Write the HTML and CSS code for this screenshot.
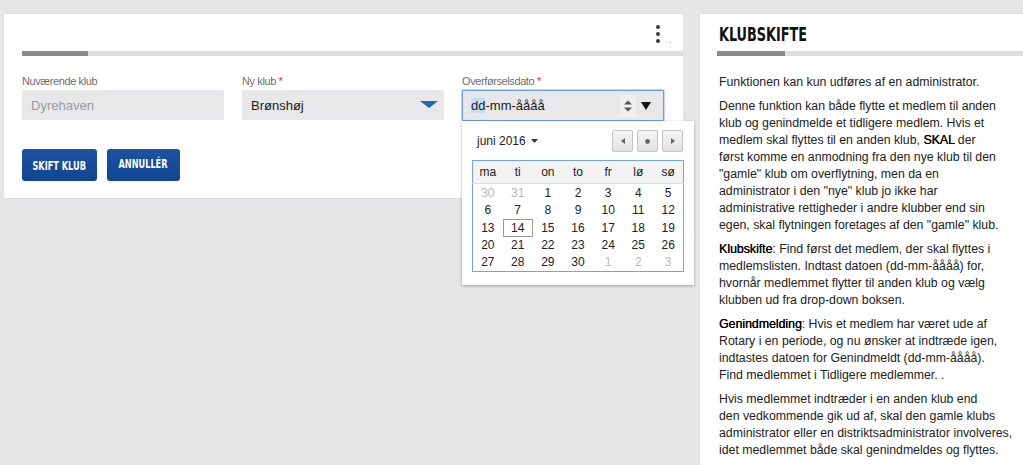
FILE: index.html
```html
<!DOCTYPE html>
<html lang="da">
<head>
<meta charset="utf-8">
<title>Klubskifte</title>
<link rel="stylesheet" href="styles.css">
</head>
<body>
<div class="page">
  <section class="card main">
    <div class="card-head">
      <span class="kebab"><i></i><i></i><i></i></span>
      <span class="blip"></span>
    </div>
    <div class="bar"><span class="bar-fill"></span></div>
    <div class="fields">
      <div class="field">
        <label class="lbl">Nuværende klub</label>
        <div class="input disabled">Dyrehaven</div>
      </div>
      <div class="field">
        <label class="lbl">Ny klub <span class="req">*</span></label>
        <div class="input select">
          <span>Brønshøj</span>
          <svg class="caret" width="18" height="8" viewBox="0 0 18 8"><path d="M0 0H18L9 7Z" fill="#1b6cb3"/></svg>
        </div>
      </div>
      <div class="field date-field">
        <label class="lbl">Overførselsdato <span class="req">*</span></label>
        <div class="input date">
          <span class="ph"><span class="sel">dd</span>-mm-åååå</span>
          <span class="spin"><svg width="10" height="14" viewBox="0 0 10 14"><path d="M1 5.5L5 1.5L9 5.5Z M1 8.5L5 12.5L9 8.5Z" fill="#555"/></svg></span>
          <svg class="drop" width="10" height="8" viewBox="0 0 10 8"><path d="M0 0H10L5 8Z" fill="#111"/></svg>
        </div>
        <div class="picker">
          <div class="picker-top">
            <span class="month">juni 2016 <svg width="7" height="4" viewBox="0 0 7 4"><path d="M0 0H7L3.5 4Z" fill="#333"/></svg></span>
            <div class="nav">
              <span class="nbtn"><svg width="4" height="6" viewBox="0 0 4 6"><path d="M4 0V6L0 3Z" fill="#666"/></svg></span>
              <span class="nbtn"><svg width="5" height="5" viewBox="0 0 5 5"><circle cx="2.5" cy="2.5" r="2.4" fill="#666"/></svg></span>
              <span class="nbtn"><svg width="4" height="6" viewBox="0 0 4 6"><path d="M0 0V6L4 3Z" fill="#666"/></svg></span>
            </div>
          </div>
          <table class="cal">
            <thead>
              <tr><th>ma</th><th>ti</th><th>on</th><th>to</th><th>fr</th><th>lø</th><th>sø</th></tr>
            </thead>
            <tbody>
              <tr><td class="out">30</td><td class="out">31</td><td>1</td><td>2</td><td>3</td><td>4</td><td>5</td></tr>
              <tr><td>6</td><td>7</td><td>8</td><td>9</td><td>10</td><td>11</td><td>12</td></tr>
              <tr><td>13</td><td class="today">14</td><td>15</td><td>16</td><td>17</td><td>18</td><td>19</td></tr>
              <tr><td>20</td><td>21</td><td>22</td><td>23</td><td>24</td><td>25</td><td>26</td></tr>
              <tr><td>27</td><td>28</td><td>29</td><td>30</td><td class="out">1</td><td class="out">2</td><td class="out">3</td></tr>
            </tbody>
          </table>
        </div>
      </div>
    </div>
    <div class="actions">
      <button class="btn btn-a"><span class="btn-txt">SKIFT KLUB</span></button>
      <button class="btn btn-b"><span class="btn-txt">ANNULLÉR</span></button>
    </div>
  </section>

  <aside class="card info">
    <div class="card-head info-head"><h2 class="title">KLUBSKIFTE</h2></div>
    <div class="bar info-bar"><span class="bar-fill"></span></div>
    <div class="text">
      <p>Funktionen kan kun udføres af en administrator.</p>
      <p>Denne funktion kan både flytte et medlem til anden<br>klub og genindmelde et tidligere medlem. Hvis et<br>medlem skal flyttes til en anden klub, <b>SKAL</b> der<br>først komme en anmodning fra den nye klub til den<br>"gamle" klub om overflytning, men da en<br>administrator i den "nye" klub jo ikke har<br>administrative rettigheder i andre klubber end sin<br>egen, skal flytningen foretages af den "gamle" klub.</p>
      <p><b>Klubskifte</b>: Find først det medlem, der skal flyttes i<br>medlemslisten. Indtast datoen (dd-mm-åååå) for,<br>hvornår medlemmet flytter til anden klub og vælg<br>klubben ud fra drop-down boksen.</p>
      <p><b>Genindmelding</b>: Hvis et medlem har været ude af<br>Rotary i en periode, og nu ønsker at indtræde igen,<br>indtastes datoen for Genindmeldt (dd-mm-åååå).<br>Find medlemmet i Tidligere medlemmer. .</p>
      <p>Hvis medlemmet indtræder i en anden klub end<br>den vedkommende gik ud af, skal den gamle klubs<br>administrator eller en distriktsadministrator involveres,<br>idet medlemmet både skal genindmeldes og flyttes.</p>
    </div>
  </aside>
</div>
</body>
</html>
```
FILE: styles.css
```css
* { box-sizing: border-box; }
html, body { margin: 0; padding: 0; }
body {
  background: #e6e6e8;
  font-family: "Liberation Sans", Arial, sans-serif;
  color: #222;
  height: 465px;
  overflow: hidden;
}
.page {
  display: flex;
  align-items: flex-start;
  gap: 17px;
  padding: 14px 0 0 4px;
}
.card {
  background: #fff;
  box-shadow: 0 0 1px rgba(0,0,0,.15);
}
.main {
  width: 679px;
  position: relative;
  padding-bottom: 17px;
}
.card-head {
  height: 37px;
  position: relative;
}
.kebab {
  position: absolute;
  right: 23px;
  top: 11px;
  display: flex;
  flex-direction: column;
  gap: 3px;
}
.kebab i {
  width: 4px;
  height: 4px;
  border-radius: 50%;
  background: #3c3c3c;
  display: block;
}
.blip {
  position: absolute;
  right: 12px;
  top: 28px;
  width: 1px;
  height: 1px;
  background: #7aa4dd;
}
.bar {
  height: 5px;
  margin-left: 18px;
  background: #dedee0;
  display: flex;
}
.bar-fill {
  width: 66px;
  background: #8b8b8d;
}
.fields {
  display: flex;
  gap: 18px;
  padding: 19px 0 0 18px;
}
.field {
  width: 202px;
  display: flex;
  flex-direction: column;
  gap: 2px;
}
.date-field { position: relative; }
.lbl {
  font-size: 11px;
  line-height: 13px;
  color: #6e6e6e;
  letter-spacing: -0.4px;
}
.req { color: #d33; }
.input {
  height: 30px;
  background: #e8e8ea;
  display: flex;
  align-items: center;
  padding: 0 9px;
  font-size: 13px;
  border-radius: 1px;
}
.input.disabled { color: #9a9a9a; }
.input.select { justify-content: space-between; color: #1a1a1a; padding-right: 6px; }
.input.date {
  height: 31px;
  border: 1px solid #6a9fe6;
  box-shadow: 0 0 0 1px rgba(120,165,235,.45);
  padding: 0 9px 0 8px;
  color: #1a1a1a;
}
.ph { flex: 1; }
.sel { background: #c5dcf7; }
.spin {
  width: 16px;
  height: 22px;
  display: flex;
  align-items: center;
  justify-content: center;
  background: #efeff1;
  margin-right: 5px;
}
.drop { margin-right: 3px; }

.picker {
  position: absolute;
  left: 0;
  top: 46px;
  width: 232px;
  height: 164px;
  background: #fff;
  box-shadow: 0 1px 3px rgba(0,0,0,.3);
  padding: 9px 11px 0 10px;
  z-index: 5;
}
.picker-top {
  display: flex;
  justify-content: space-between;
  align-items: center;
  height: 22px;
  margin-bottom: 8px;
}
.month {
  font-size: 12px;
  padding-left: 5px;
  color: #222;
  display: flex;
  align-items: center;
  gap: 5px;
}
.nav { display: flex; gap: 4px; }
.nbtn {
  width: 21px;
  height: 22px;
  border: 1px solid #c4c4c4;
  border-radius: 2px;
  background: linear-gradient(#f6f6f6, #e2e2e2);
  display: flex;
  align-items: center;
  justify-content: center;
}
.cal {
  width: 212px;
  border: 1px solid #6fa5f0;
  border-collapse: collapse;
  font-size: 12px;
  table-layout: fixed;
}
.cal th {
  font-weight: normal;
  background: #f3f3f3;
  height: 23px;
  border-bottom: 1px solid #dcdcdc;
  padding: 0;
  color: #222;
}
.cal td {
  text-align: center;
  height: 17.7px;
  padding: 0;
  color: #222;
}
.cal tbody tr:last-child td { padding-bottom: 1px; }
.cal td.out { color: #b9b9b9; }
.cal td.today { outline: 1px solid #9a9a9a; outline-offset: -1px; }

.actions {
  display: flex;
  gap: 10px;
  padding: 28px 0 0 18px;
}
.btn {
  height: 32px;
  padding: 0;
  border: none;
  border-radius: 3px;
  background: linear-gradient(#1c52a0, #0f4591);
  color: #fff;
  display: flex;
  align-items: center;
  justify-content: center;
  overflow: visible;
}
.btn-a { width: 75px; }
.btn-b { width: 73px; }
.btn-txt {
  display: inline-block;
  white-space: nowrap;
  font-family: "DejaVu Sans Condensed", "DejaVu Sans", sans-serif;
  font-weight: bold;
  font-size: 13px;
  transform: scaleX(0.7);
}
.btn-b .btn-txt { margin-top: -3px; }

.info {
  flex: 1;
  height: 451px;
  overflow: hidden;
}
.info-head { padding: 9px 0 0 19px; }
.title {
  margin: 0;
  display: inline-block;
  white-space: nowrap;
  font-family: "DejaVu Sans Condensed", "DejaVu Sans", sans-serif;
  font-weight: bold;
  font-size: 19px;
  color: #111;
  transform: scaleX(0.75);
  transform-origin: left center;
}
.info-bar { margin-left: 17px; }
.info-bar .bar-fill { width: 68px; }
.text {
  padding: 18px 0 0 19px;
  width: 320px;
  font-size: 12.3px;
  line-height: 17px;
  white-space: nowrap;
}
.text p { margin: 0 0 7px; }
.text b { font-weight: normal; color: #000; text-shadow: 0.3px 0 0 #000; }
```
